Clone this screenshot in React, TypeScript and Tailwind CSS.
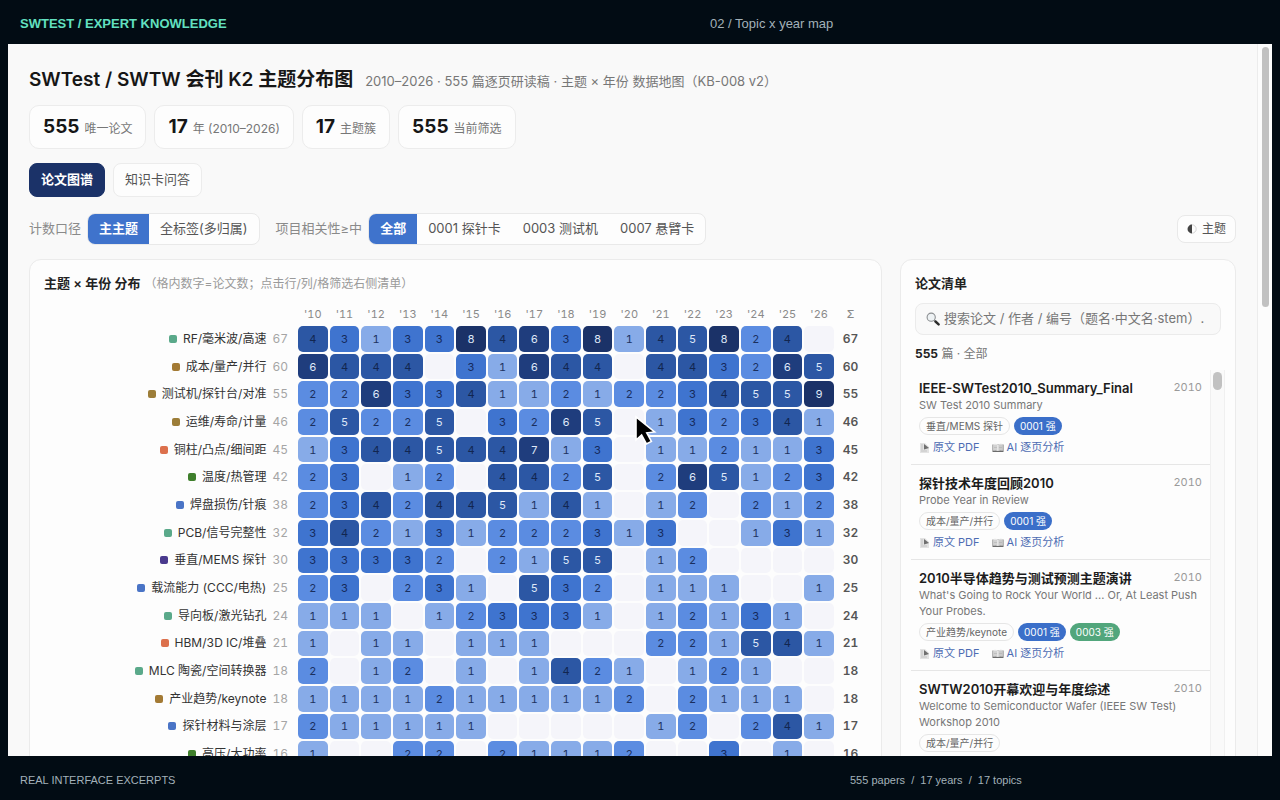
import { useState } from 'react';

const SANS = "font-['Inter','Noto_Sans_CJK_SC',sans-serif]";

const YEARS = ['10', '11', '12', '13', '14', '15', '16', '17', '18', '19', '20', '21', '22', '23', '24', '25', '26'];

interface Topic {
  name: string;
  dot: string;
  total: number;
  counts: number[];
}

const TOPICS: Topic[] = [
  { name: 'RF/毫米波/高速', dot: 'bg-[#5aa98a]', total: 67, counts: [4, 3, 1, 3, 3, 8, 4, 6, 3, 8, 1, 4, 5, 8, 2, 4, 0] },
  { name: '成本/量产/并行', dot: 'bg-[#a37a34]', total: 60, counts: [6, 4, 4, 4, 0, 3, 1, 6, 4, 4, 0, 4, 4, 3, 2, 6, 5] },
  { name: '测试机/探针台/对准', dot: 'bg-[#9c7d38]', total: 55, counts: [2, 2, 6, 3, 3, 4, 1, 1, 2, 1, 2, 2, 3, 4, 5, 5, 9] },
  { name: '运维/寿命/计量', dot: 'bg-[#9c7d38]', total: 46, counts: [2, 5, 2, 2, 5, 0, 3, 2, 6, 5, 0, 1, 3, 2, 3, 4, 1] },
  { name: '铜柱/凸点/细间距', dot: 'bg-[#dc704c]', total: 45, counts: [1, 3, 4, 4, 5, 4, 4, 7, 1, 3, 0, 1, 1, 2, 1, 1, 3] },
  { name: '温度/热管理', dot: 'bg-[#3f7f2c]', total: 42, counts: [2, 3, 0, 1, 2, 0, 4, 4, 2, 5, 0, 2, 6, 5, 1, 2, 3] },
  { name: '焊盘损伤/针痕', dot: 'bg-[#4a74c6]', total: 38, counts: [2, 3, 4, 2, 4, 4, 5, 1, 4, 1, 0, 1, 2, 0, 2, 1, 2] },
  { name: 'PCB/信号完整性', dot: 'bg-[#5aa98a]', total: 32, counts: [3, 4, 2, 1, 3, 1, 2, 2, 2, 3, 1, 3, 0, 0, 1, 3, 1] },
  { name: '垂直/MEMS 探针', dot: 'bg-[#4a3a8e]', total: 30, counts: [3, 3, 3, 3, 2, 0, 2, 1, 5, 5, 0, 1, 2, 0, 0, 0, 0] },
  { name: '载流能力 (CCC/电热)', dot: 'bg-[#4a74c6]', total: 25, counts: [2, 3, 0, 2, 3, 1, 0, 5, 3, 2, 0, 1, 1, 1, 0, 0, 1] },
  { name: '导向板/激光钻孔', dot: 'bg-[#5aa98a]', total: 24, counts: [1, 1, 1, 0, 1, 2, 3, 3, 3, 1, 0, 1, 2, 1, 3, 1, 0] },
  { name: 'HBM/3D IC/堆叠', dot: 'bg-[#dc704c]', total: 21, counts: [1, 0, 1, 1, 0, 1, 1, 1, 0, 0, 0, 2, 2, 1, 5, 4, 1] },
  { name: 'MLC 陶瓷/空间转换器', dot: 'bg-[#5aa98a]', total: 18, counts: [2, 0, 1, 2, 0, 1, 0, 1, 4, 2, 1, 0, 1, 2, 1, 0, 0] },
  { name: '产业趋势/keynote', dot: 'bg-[#a37a34]', total: 18, counts: [1, 1, 1, 1, 2, 1, 1, 1, 1, 1, 2, 0, 2, 1, 1, 1, 0] },
  { name: '探针材料与涂层', dot: 'bg-[#4a74c6]', total: 17, counts: [2, 1, 1, 1, 1, 1, 0, 0, 0, 0, 0, 1, 2, 0, 2, 4, 1] },
  { name: '高压/大功率', dot: 'bg-[#3f7f2c]', total: 16, counts: [1, 0, 0, 2, 2, 0, 2, 1, 1, 1, 2, 0, 0, 3, 0, 1, 0] },
];

const HEAT = [
  'bg-[#f5f5fa]',
  'bg-[#87abe8] text-[#1d3260]',
  'bg-[#5b8ce1] text-[#1a2f5e]',
  'bg-[#3f74cf] text-[#15295a]',
  'bg-[#2c57a4] text-[#12264f]',
  'bg-[#2c57a4] text-[#dfe8f8]',
  'bg-[#1f3d7d] text-[#dfe8f8]',
  'bg-[#1f3d7d] text-[#dfe8f8]',
  'bg-[#1b3268] text-[#dfe8f8]',
  'bg-[#1b3268] text-[#dfe8f8]',
];

const STATS = [
  { value: '555', label: '唯一论文' },
  { value: '17', label: '年 (2010–2026)' },
  { value: '17', label: '主题簇' },
  { value: '555', label: '当前筛选' },
];

const PAPERS = [
  { title: 'IEEE-SWTest2010_Summary_Final', sub: 'SW Test 2010 Summary', tag: '垂直/MEMS 探针', marks: ['0001 强'] },
  { title: '探针技术年度回顾2010', sub: 'Probe Year in Review', tag: '成本/量产/并行', marks: ['0001 强'] },
  {
    title: '2010半导体趋势与测试预测主题演讲',
    sub: "What's Going to Rock Your World ... Or, At Least Push Your Probes.",
    tag: '产业趋势/keynote',
    marks: ['0001 强', '0003 强'],
  },
  {
    title: 'SWTW2010开幕欢迎与年度综述',
    sub: 'Welcome to Semiconductor Wafer (IEEE SW Test) Workshop 2010',
    tag: '成本/量产/并行',
    marks: [],
  },
];

interface SegmentedProps {
  options: string[];
  value: string;
  onChange: (value: string) => void;
}

const Segmented = ({ options, value, onChange }: SegmentedProps) => (
  <div className="flex h-8 overflow-hidden rounded-lg border border-[#e9e9e9] bg-[#fdfdfd]">
    {options.map((option) => (
      <button
        key={option}
        onClick={() => onChange(option)}
        className={`cursor-pointer px-[11px] ${option === value ? 'bg-[#3f73cc] font-semibold text-white' : 'text-[#555]'}`}
      >
        {option}
      </button>
    ))}
  </div>
);

const SearchIcon = () => (
  <svg viewBox="0 0 14 14" className="h-[14px] w-[14px]" aria-hidden="true">
    <circle cx="5.2" cy="5.2" r="4.1" fill="#eef2f4" stroke="#8c8f92" strokeWidth="1.1" />
    <path d="M8.4 8.4L9.6 9.6" stroke="#77797b" strokeWidth="1.4" />
    <path d="M9.5 9.5L12.6 12.4" stroke="#2b2b2b" strokeWidth="2.4" strokeLinecap="round" />
  </svg>
);

const FileIcon = () => (
  <svg viewBox="0 0 11 12" className="h-3 w-[11px]" aria-hidden="true">
    <path d="M1 1H6L10 5V11H1Z" fill="#e3e3e3" />
    <path d="M5 2L10 6L5 7.5Z" fill="#6f6f6f" />
    <path d="M2 3H4M2 5H4M2 7H4M2 9H8" stroke="#b5b5b5" strokeWidth="0.7" />
  </svg>
);

const BookIcon = () => (
  <svg viewBox="0 0 12 12" className="h-3 w-3" aria-hidden="true">
    <path d="M0.5 2.5H11.5V10H0.5Z" fill="#6b6b6b" />
    <path d="M1.2 2Q4 1.2 6 2.4V9Q4 8 1.2 8.8Z" fill="#e6e6e6" />
    <path d="M10.8 2Q8 1.2 6 2.4V9Q8 8 10.8 8.8Z" fill="#dadada" />
    <path d="M2 4H5M2 5.5H5M7 4H10M7 5.5H10M2 7H5M7 7H10" stroke="#a5a5a5" strokeWidth="0.6" />
  </svg>
);

const HeatTable = () => (
  <table className="mt-[10px] h-[467px] w-full table-fixed border-separate border-spacing-[2px] tabular-nums">
    <colgroup>
      <col className="w-[250px]" />
      {YEARS.map((y) => (
        <col key={y} />
      ))}
      <col className="w-[29px]" />
    </colgroup>
    <thead>
      <tr className="h-5 text-[11px] leading-4 text-[#8a8a8a]">
        <td />
        {YEARS.map((y) => (
          <th key={y} scope="col" className="p-0 font-normal">
            '{y}
          </th>
        ))}
        <th scope="col" className="p-0 font-medium">
          Σ
        </th>
      </tr>
    </thead>
    <tbody>
      {TOPICS.map((topic) => (
        <tr key={topic.name} className="text-[11px] leading-4">
          <th scope="row" className="p-0 pr-2 text-xs font-normal whitespace-nowrap text-[#333]">
            <span className="flex items-center justify-end">
              <span className={`mr-[6px] size-2 rounded-xs ${topic.dot}`} />
              {topic.name}
              <span className="ml-[6px] text-[#a5a5a5]">{topic.total}</span>
            </span>
          </th>
          {topic.counts.map((count, i) => (
            <td key={YEARS[i]} className={`cursor-pointer rounded-[5px] p-0 text-center ${HEAT[count]}`}>
              {count > 0 && count}
            </td>
          ))}
          <td className="p-0 text-center text-xs font-semibold text-[#555]">{topic.total}</td>
        </tr>
      ))}
    </tbody>
  </table>
);

const PaperItem = ({ paper }: { paper: (typeof PAPERS)[number] }) => (
  <li className="border-b border-[#e6e6e6] px-2 pt-[9px] pb-2">
    <div className="flex justify-between">
      <h3 className="text-[13px] leading-[18px] font-semibold text-[#1c1c1c]">{paper.title}</h3>
      <span className="text-[11px] leading-4 text-[#9a9a9a] tabular-nums">2010</span>
    </div>
    <p className="text-[11px] leading-4 text-[#777]">{paper.sub}</p>
    <div className="mt-1 flex gap-1 text-[10px] leading-4">
      <span className="rounded-full border border-[#e6e6e6] px-[6px] text-[#666]">{paper.tag}</span>
      {paper.marks.map((mark) => (
        <span key={mark} className={`rounded-full px-[6px] py-px text-white ${mark.startsWith('0003') ? 'bg-[#52a67c]' : 'bg-[#3b6fc9]'}`}>
          {mark}
        </span>
      ))}
    </div>
    <div className="mt-1 flex gap-3 text-[11px] leading-[17px] text-[#4d6cb3]">
      <a href="#pdf" className="flex items-center gap-[3px]">
        <FileIcon />
        原文 PDF
      </a>
      <a href="#analysis" className="flex items-center gap-[3px]">
        <BookIcon />
        AI 逐页分析
      </a>
    </div>
  </li>
);

export default function App() {
  const [tab, setTab] = useState('论文图谱');
  const [scope, setScope] = useState('主主题');
  const [project, setProject] = useState('全部');

  return (
    <div className="flex h-screen flex-col overflow-hidden bg-[#020c14] font-['Liberation_Sans',sans-serif]">
      <header className="flex h-11 shrink-0 items-center px-5 pt-1 text-[13px]">
        <span className="w-[690px] font-bold text-[#62e0c0]">SWTEST / EXPERT KNOWLEDGE</span>
        <span className="text-[#a3b1b9]">02 / Topic x year map</span>
      </header>

      <div className={`relative mx-2 flex min-h-0 flex-1 overflow-hidden bg-[#f9f9f9] text-[13px] ${SANS}`}>
        <main className="min-w-0 flex-1 px-[21px] pt-[22px]">
          <div className="flex items-baseline gap-3">
            <h1 className="text-[19px] leading-7 font-semibold text-[#161616]">SWTest / SWTW 会刊 K2 主题分布图</h1>
            <p className="text-[#777]">2010–2026 · 555 篇逐页研读稿 · 主题 × 年份 数据地图（KB-008 v2）</p>
          </div>

          <div className="mt-[11px] flex gap-2">
            {STATS.map((stat) => (
              <div key={stat.label} className="flex h-11 items-center rounded-[10px] border border-[#ececec] bg-[#fdfdfd] px-[13px]">
                <p className="flex items-baseline gap-[5px] text-xs text-[#777]">
                  <b className="text-[19px] leading-7 font-bold text-[#161616]">{stat.value}</b>
                  {stat.label}
                </p>
              </div>
            ))}
          </div>

          <div className="mt-[14px] flex gap-2">
            {['论文图谱', '知识卡问答'].map((name) => (
              <button
                key={name}
                onClick={() => setTab(name)}
                className={`h-[34px] cursor-pointer rounded-lg border px-[11px] ${
                  name === tab ? 'border-[#1b3268] bg-[#1b3268] font-semibold text-white' : 'border-[#ececec] bg-[#fdfdfd] text-[#555]'
                }`}
              >
                {name}
              </button>
            ))}
          </div>

          <div className="mt-4 flex items-center">
            <span className="mr-[6px] text-[#8a8a8a]">计数口径</span>
            <Segmented options={['主主题', '全标签(多归属)']} value={scope} onChange={setScope} />
            <span className="mr-[6px] ml-4 text-[#8a8a8a]">项目相关性≥中</span>
            <Segmented options={['全部', '0001 探针卡', '0003 测试机', '0007 悬臂卡']} value={project} onChange={setProject} />
            <button className="ml-auto flex h-7 cursor-pointer items-center gap-[5px] rounded-lg border border-[#e9e9e9] bg-[#fdfdfd] px-[9px] text-xs text-[#555]">
              <svg viewBox="0 0 10 10" className="size-[10px]" aria-hidden="true">
                <circle cx="5" cy="5" r="4.2" fill="none" stroke="#bbb" strokeWidth="0.6" />
                <path d="M5 0.6A4.4 4.4 0 0 0 5 9.4Z" fill="#444" />
              </svg>
              主题
            </button>
          </div>

          <div className="mt-[14px] grid grid-cols-[minmax(0,1fr)_336px] gap-[18px]">
            <section className="rounded-xl border border-[#ebebeb] bg-[#fdfdfd] p-[14px]">
              <h2 className="leading-[18px] font-semibold text-[#222]">
                主题 × 年份 分布
                <span className="ml-1 text-xs font-normal text-[#9a9a9a]">（格内数字=论文数；点击行/列/格筛选右侧清单）</span>
              </h2>
              <HeatTable />
            </section>

            <section className="rounded-xl border border-[#ebebeb] bg-[#fdfdfd] p-[14px]">
              <h2 className="leading-[18px] font-semibold text-[#222]">论文清单</h2>
              <div className="mt-[11px] flex h-8 items-center gap-1 rounded-lg border border-[#ebebeb] bg-[#f9f9f9] px-[10px]">
                <SearchIcon />
                <input
                  type="text"
                  aria-label="搜索论文"
                  placeholder="搜索论文 / 作者 / 编号（题名·中文名·stem）."
                  className="min-w-0 flex-1 bg-transparent outline-none placeholder:text-[#777]"
                />
              </div>
              <p className="mt-[10px] text-xs leading-[18px] text-[#777]">
                <b className="text-[#222]">555</b> 篇 · 全部
              </p>
              <div className="-mx-1 mt-[7px] flex">
                <ul className="min-w-0 flex-1">
                  {PAPERS.map((paper) => (
                    <PaperItem key={paper.title} paper={paper} />
                  ))}
                </ul>
                <div className="w-[15px] border-x border-[#f0f0f0] bg-[#fafafa] px-[2px] pt-[2px]">
                  <div className="h-[18px] rounded-full bg-[#c1c1c1]" />
                </div>
              </div>
            </section>
          </div>
        </main>

        <div className="w-[15px] shrink-0 border-l border-[#ececec] bg-[#fcfcfc] pt-[3px] pr-[3px] pl-1">
          <div className="h-[260px] rounded-full bg-[#c1c1c1]" />
        </div>

        {/* pointer */}
        <svg viewBox="0 0 24 32" className="absolute top-[370px] left-[625px] h-8 w-6" aria-hidden="true">
          <path d="M3 3V26L8.6 21L13.4 30L18.4 27.4L13.8 18.8L21.6 18Z" fill="#000" stroke="#fff" strokeWidth="1.6" />
        </svg>
      </div>

      <footer className="flex h-11 shrink-0 items-center px-5 pt-1 text-[11px] text-[#a3b1b9]">
        <span className="w-[830px]">REAL INTERFACE EXCERPTS</span>
        <span className="whitespace-pre">555 papers  /  17 years  /  17 topics</span>
      </footer>
    </div>
  );
}
